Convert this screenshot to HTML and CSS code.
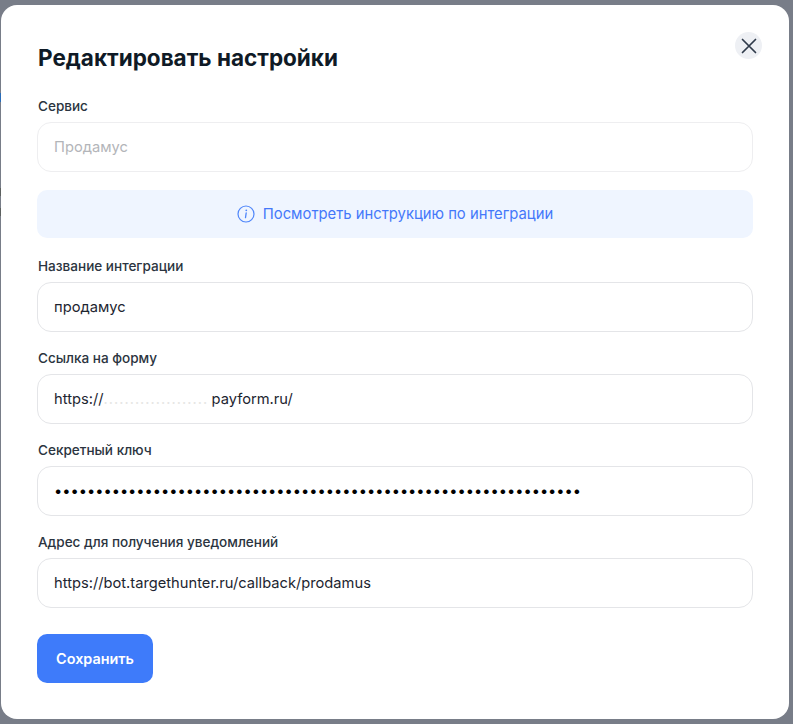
FILE: index.html
```html
<!DOCTYPE html>
<html lang="ru">
<head>
<meta charset="utf-8">
<title>Редактировать настройки</title>
<link rel="stylesheet" href="styles.css">
</head>
<body>
<div class="overlay">
  <section class="modal">
    <header class="modal-head">
      <h1 class="title">Редактировать настройки</h1>
      <button class="close" aria-label="Закрыть">
        <svg width="16" height="16" viewBox="0 0 16 16" fill="none"><path d="M1.5 1.5l13 13M14.5 1.5l-13 13" stroke="#2f3a4a" stroke-width="1.7" stroke-linecap="round"/></svg>
      </button>
    </header>
    <div class="group group-first">
      <div class="label">Сервис</div>
      <div class="field field-disabled">Продамус</div>
    </div>
    <a class="info">
      <svg width="18" height="18" viewBox="0 0 18 18" fill="none"><circle cx="9" cy="9" r="8" stroke="#4f86fa" stroke-width="1.2"/><circle cx="9.3" cy="5.3" r="0.9" fill="#4f86fa"/><path d="M9.2 7.8L8.5 12.7" stroke="#4f86fa" stroke-width="1.3" stroke-linecap="round"/></svg>
      <span>Посмотреть инструкцию по интеграции</span>
    </a>
    <div class="group">
      <div class="label">Название интеграции</div>
      <div class="field">продамус</div>
    </div>
    <div class="group">
      <div class="label">Ссылка на форму</div>
      <div class="field">https://<span class="masked">....................</span>payform.ru/</div>
    </div>
    <div class="group">
      <div class="label">Секретный ключ</div>
      <div class="field field-secret">••••••••••••••••••••••••••••••••••••••••••••••••••••••••••••••••</div>
    </div>
    <div class="group">
      <div class="label">Адрес для получения уведомлений</div>
      <div class="field">https://bot.targethunter.ru/callback/prodamus</div>
    </div>
    <button class="save">Сохранить</button>
  </section>
</div>
</body>
</html>
```
FILE: styles.css
```css
* { box-sizing: border-box; }
html, body { margin: 0; height: 100%; }
body {
  background:
    linear-gradient(#2a6cb8, #2a6cb8) 0 93px / 1px 9px no-repeat,
    linear-gradient(#5c615f, #5c615f) 0 188px / 1px 8px no-repeat,
    linear-gradient(#5c615f, #5c615f) 0 208px / 1px 8px no-repeat,
    #787d88;
  font-family: Inter, "Noto Sans", sans-serif;
  overflow: hidden;
}
.overlay { padding: 5px 4px 5px 1px; height: 724px; }
.modal {
  background: #fff;
  border-radius: 16px;
  height: 714px;
  padding: 0 36px;
}
.modal-head { display: flex; justify-content: space-between; align-items: flex-start; height: 91px; }
.title { margin: 37px 0 0 1px; font-size: 22.5px; line-height: 32px; font-weight: 700; color: #0f1a26; }
.close {
  width: 27px; height: 27px; margin: 27px -9px 0 0; padding: 0; border: 0; border-radius: 50%;
  background: #eef0f4; display: flex; align-items: center; justify-content: center;
}
.group { margin-top: 16px; }
.group-first { margin-top: 0; }
.label { margin: 0 0 6px 1px; font-size: 13.55px; line-height: 20px; font-weight: 500; color: #2b3440; }
.field {
  height: 50px; border: 1px solid #e4e5e8; border-radius: 14px; padding: 0 16px;
  display: flex; align-items: center; white-space: pre;
  font-size: 14.7px; color: #1d2530;
}
.field-disabled { color: #b3b5b9; border-color: #eeeef0; }
.field-secret { color: #000; font-size: 14.65px; }
.masked { display: inline-block; width: 108px; color: #e6e6e4; letter-spacing: 1px; }
.info {
  display: flex; align-items: center; justify-content: center; gap: 8px;
  height: 48px; margin: 18px 0; border-radius: 10px;
  background: #eff5ff; color: #4478fa; font-size: 14.8px; font-weight: 400;
}
.save {
  display: block; width: 116px; height: 49px; margin-top: 26px; border: 0; border-radius: 10px;
  background: #3e7bfa; color: #fff; font: 600 14.4px Inter, sans-serif;
}
```
